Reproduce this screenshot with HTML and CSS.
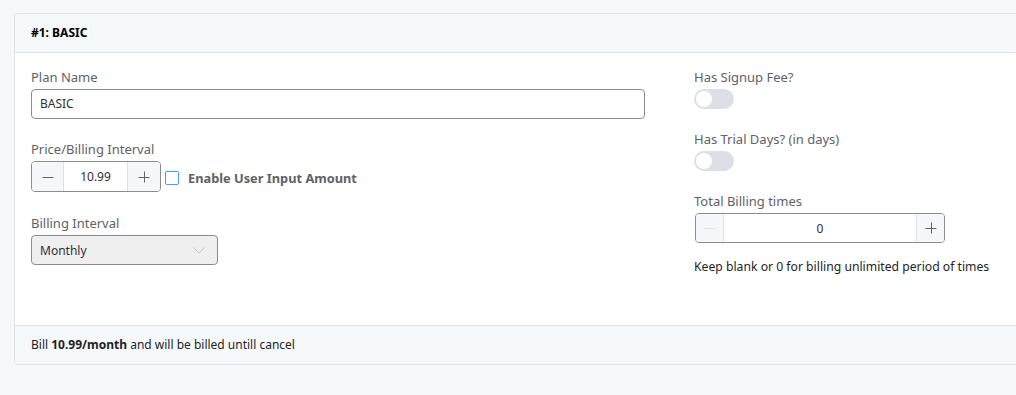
FILE: index.html
```html
<!DOCTYPE html>
<html>
<head>
<meta charset="utf-8">
<link rel="stylesheet" href="styles.css">
</head>
<body>
<div class="card">
  <div class="card-header">#1: BASIC</div>
  <div class="card-body">
    <div class="col col-left">
      <div class="group">
        <div class="label">Plan Name</div>
        <div class="text-input">BASIC</div>
      </div>
      <div class="group">
        <div class="label">Price/Billing Interval</div>
        <div class="price-row">
          <div class="stepper stepper-small">
            <span class="step-btn step-minus"><svg width="12" height="12" viewBox="0 0 12 12"><path d="M0.5 6.5H11.5" stroke="#606266" stroke-width="1"/></svg></span>
            <span class="step-value">10.99</span>
            <span class="step-btn step-plus"><svg width="12" height="12" viewBox="0 0 12 12"><path d="M0.5 6.5H11.5M6.5 0.5V11.5" stroke="#606266" stroke-width="1"/></svg></span>
          </div>
          <span class="checkbox"></span>
          <span class="check-label">Enable User Input Amount</span>
        </div>
      </div>
      <div class="group">
        <div class="label">Billing Interval</div>
        <div class="select">
          <span>Monthly</span>
          <svg class="chev" width="12" height="7" viewBox="0 0 12 7"><path d="M0.5 0.5L6 6L11.5 0.5" fill="none" stroke="#c0c4cc" stroke-width="1"/></svg>
        </div>
      </div>
    </div>
    <div class="col col-right">
      <div class="group">
        <div class="label">Has Signup Fee?</div>
        <div class="switch"><span class="knob"></span></div>
      </div>
      <div class="group">
        <div class="label">Has Trial Days? (in days)</div>
        <div class="switch"><span class="knob"></span></div>
      </div>
      <div class="group">
        <div class="label">Total Billing times</div>
        <div class="stepper stepper-wide">
          <span class="step-btn step-minus"><svg width="12" height="12" viewBox="0 0 12 12"><path d="M0.5 6.5H11.5" stroke="#dcdfe6" stroke-width="1"/></svg></span>
          <span class="step-value">0</span>
          <span class="step-btn step-plus"><svg width="12" height="12" viewBox="0 0 12 12"><path d="M0.5 6.5H11.5M6.5 0.5V11.5" stroke="#606266" stroke-width="1"/></svg></span>
        </div>
        <div class="help">Keep blank or 0 for billing unlimited period of times</div>
      </div>
    </div>
  </div>
  <div class="card-footer">Bill <b>10.99/month</b> and will be billed untill cancel</div>
</div>
</body>
</html>
```
FILE: styles.css
```css
html, body {
  margin: 0;
  padding: 0;
  background: #f5f9fc;
  overflow: hidden;
}
body {
  padding: 13px 0 0 14px;
  font-family: "Noto Sans", "Open Sans", sans-serif;
  color: #1e1e1e;
  width: 1016px;
  height: 395px;
  box-sizing: border-box;
}
.card {
  width: 1060px;
  border: 1px solid #dfe3e8;
  border-radius: 4px;
  background: #fff;
}
.card-header {
  height: 38px;
  line-height: 38px;
  padding-left: 16px;
  font-size: 12px;
  font-weight: 700;
  color: #000;
  background: #f5f9fc;
  border-bottom: 1px solid #dfe3e8;
  border-radius: 4px 0 0 0;
}
.card-body {
  display: flex;
  padding: 15px 16px 49px 16px;
}
.col-left {
  width: 614px;
  margin-right: 49px;
}
.col-right {
  flex: 1;
}
.group {
  margin-bottom: 21px;
}
.group:last-child {
  margin-bottom: 0;
}
.col-left .group:nth-child(2) {
  margin-bottom: 22px;
}
.label {
  font-size: 13px;
  line-height: 18px;
  color: #606266;
  margin-bottom: 3px;
}
.text-input {
  height: 30px;
  box-sizing: border-box;
  border: 1px solid #8c8c8c;
  border-radius: 4px;
  padding: 0 8px;
  font-size: 12px;
  line-height: 28px;
  color: #303133;
}
.price-row {
  display: flex;
  align-items: center;
}
.stepper {
  display: flex;
  box-sizing: border-box;
  height: 31px;
  border: 1px solid #8c8c8c;
  border-radius: 4px;
  overflow: hidden;
  background: #fff;
}
.stepper-small {
  width: 130px;
}
.stepper-wide {
  width: 250px;
  height: 30px;
  margin-left: 1px;
}
.step-btn {
  display: flex;
  align-items: center;
  justify-content: center;
  background: #f5f7fa;
  width: 31px;
}
.stepper-wide .step-btn {
  width: 27px;
}
.step-minus {
  border-right: 1px solid #dcdfe6;
}
.step-plus {
  border-left: 1px solid #dcdfe6;
}
.stepper-small .step-plus {
  width: 32px;
}
.step-value {
  flex: 1;
  display: flex;
  align-items: center;
  justify-content: center;
  font-size: 12px;
  color: #303133;
}
.checkbox {
  width: 12px;
  height: 12px;
  border: 1px solid #409eff;
  border-radius: 2px;
  margin-left: 4px;
  margin-top: 2px;
  background: #fff;
}
.check-label {
  margin-left: 9px;
  margin-top: 2px;
  font-size: 12.8px;
  font-weight: 700;
  color: #606266;
}
.select {
  width: 187px;
  height: 30px;
  box-sizing: border-box;
  border: 1px solid #8c8c8c;
  border-radius: 4px;
  background: #efefef;
  display: flex;
  align-items: center;
  justify-content: space-between;
  padding: 0 12px 0 8px;
  font-size: 12px;
  color: #303133;
}
.switch {
  width: 40px;
  height: 20px;
  border-radius: 10px;
  background: #dcdfe6;
  position: relative;
}
.knob {
  position: absolute;
  left: 2px;
  top: 2px;
  width: 16px;
  height: 16px;
  border-radius: 50%;
  background: #fff;
}
.help {
  margin-top: 15px;
  font-size: 12.2px;
  line-height: 18px;
  color: #1e1e1e;
}
.card-footer {
  height: 38px;
  line-height: 38px;
  padding-left: 16px;
  font-size: 12px;
  color: #1e1e1e;
  background: #f5f9fc;
  border-top: 1px solid #dfe3e8;
  border-radius: 0 0 0 4px;
}
.card-footer b {
  font-weight: 700;
}
```
